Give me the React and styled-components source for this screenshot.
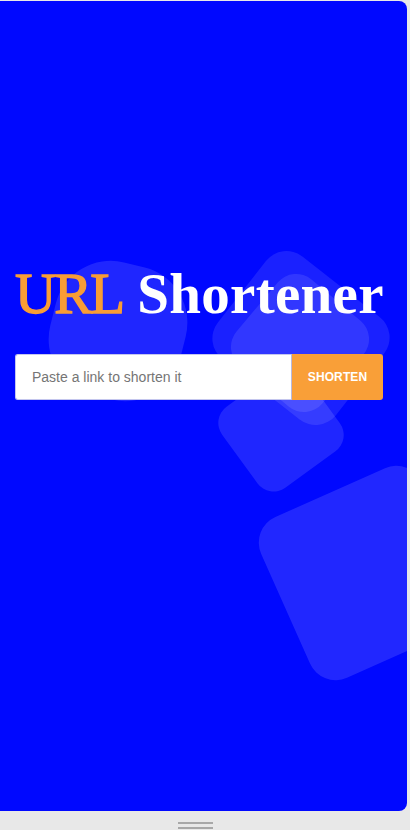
import React from "react";
import styled, { createGlobalStyle } from "styled-components";

const GlobalStyle = createGlobalStyle`
  html, body {
    margin: 0;
    padding: 0;
    background: #e8e8e8;
  }
  * {
    box-sizing: border-box;
  }
`;

const shapes = [
  { left: 51, top: 262, w: 134, h: 136, r: "42%", rot: 14, a: 0.12 },
  { left: 226, top: 272, w: 150, h: 130, r: "26px", rot: 38, a: 0.1 },
  { left: 244, top: 286, w: 112, h: 112, r: "24px", rot: 40, a: 0.1 },
  { left: 230, top: 378, w: 102, h: 100, r: "20px", rot: -36, a: 0.12 },
  { left: 278, top: 484, w: 176, h: 176, r: "28px", rot: -24, a: 0.13 },
];

const App = () => {
  return (
    <>
      <GlobalStyle />
      <Frame>
        <Panel>
          {shapes.map((s, i) => (
            <Blob
              key={i}
              style={{
                left: s.left,
                top: s.top,
                width: s.w,
                height: s.h,
                borderRadius: s.r,
                transform: `rotate(${s.rot}deg)`,
                background: `rgba(255,255,255,${s.a})`,
              }}
            />
          ))}
          <Content>
            <Title>
              <Accent>URL</Accent> <Strong>Shortener</Strong>
            </Title>
            <Form onSubmit={(e) => e.preventDefault()}>
              <LinkInput type="text" placeholder="Paste a link to shorten it" />
              <ShortenButton type="submit">SHORTEN</ShortenButton>
            </Form>
          </Content>
        </Panel>
        <HandleArea>
          <HandleBar />
          <HandleBar />
        </HandleArea>
      </Frame>
    </>
  );
};

export default App;

const Frame = styled.div`
  width: 410px;
  height: 830px;
  padding-top: 1px;
  display: flex;
  flex-direction: column;
  overflow: hidden;
`;

const Panel = styled.main`
  position: relative;
  width: 407px;
  height: 810px;
  flex-shrink: 0;
  background: #0008ff;
  border-radius: 0 8px 8px 0;
  overflow: hidden;
  padding-top: 264px;
`;

const Blob = styled.div`
  position: absolute;
  z-index: 0;
`;

const Content = styled.div`
  position: relative;
  z-index: 1;
  width: 368px;
  margin-left: 15px;
  display: flex;
  flex-direction: column;
`;

const Title = styled.h1`
  margin: 0;
  font-family: "Liberation Serif", "Times New Roman", serif;
  font-size: 57px;
  line-height: 57px;
  white-space: nowrap;
  color: #ffffff;
`;

const Accent = styled.span`
  color: #f99d35;
  font-weight: 400;
  letter-spacing: -2px;
  -webkit-text-stroke: 1.4px #f99d35;
`;

const Strong = styled.span`
  font-weight: 700;
  letter-spacing: 0.3px;
`;

const Form = styled.form`
  margin-top: 32px;
  display: flex;
  height: 46px;
`;

const LinkInput = styled.input`
  width: 276px;
  height: 46px;
  border: 1px solid #c4c6ee;
  border-right: none;
  border-radius: 3px 0 0 3px;
  padding: 0 16px;
  font-family: "Liberation Sans", Arial, sans-serif;
  font-size: 14px;
  color: #333;
  background: #ffffff;
  outline: none;

  &::placeholder {
    color: #757575;
  }
`;

const ShortenButton = styled.button`
  width: 92px;
  height: 46px;
  border: none;
  border-left: 1px solid #b9b9e0;
  border-radius: 0 3px 3px 0;
  background: #f99f38;
  color: #ffffff;
  font-family: "Liberation Sans", Arial, sans-serif;
  font-weight: 700;
  font-size: 12px;
  letter-spacing: 0.1px;
  cursor: pointer;
  padding: 0;
`;

const HandleArea = styled.div`
  flex: 1;
  display: flex;
  flex-direction: column;
  align-items: center;
  padding-top: 11px;
  padding-right: 20px;
  gap: 3px;
`;

const HandleBar = styled.div`
  width: 35px;
  height: 2px;
  background: #a8a8a8;
`;
